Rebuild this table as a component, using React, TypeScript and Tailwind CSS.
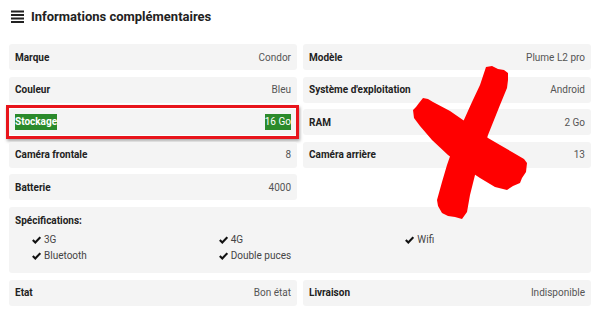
import React from 'react';

type Spec = { label: string; value: string; highlight?: boolean };

const leftSpecs: Spec[] = [
  { label: 'Marque', value: 'Condor' },
  { label: 'Couleur', value: 'Bleu' },
  { label: 'Stockage', value: '16 Go', highlight: true },
  { label: 'Caméra frontale', value: '8' },
  { label: 'Batterie', value: '4000' },
];

const rightSpecs: Spec[] = [
  { label: 'Modèle', value: 'Plume L2 pro' },
  { label: "Système d'exploitation", value: 'Android' },
  { label: 'RAM', value: '2 Go' },
  { label: 'Caméra arrière', value: '13' },
];

const features = ['3G', '4G', 'Wifi', 'Bluetooth', 'Double puces'];

const BarsIcon = () => (
  <svg width="13" height="13" viewBox="0 0 13 13" className="shrink-0">
    <rect x="0" y="0.5" width="13" height="2" fill="#222" />
    <rect x="0" y="4" width="13" height="2" fill="#222" />
    <rect x="0" y="7.5" width="13" height="2" fill="#222" />
    <rect x="0" y="11" width="13" height="2" fill="#222" />
  </svg>
);

const Check = () => (
  <svg width="9" height="8" viewBox="0 0 9 8" className="shrink-0">
    <path d="M0.8 4 L3.3 6.5 L8.3 1.1" fill="none" stroke="#111" strokeWidth="2.1" />
  </svg>
);

const Row = ({ label, value, highlight }: Spec) => (
  <div className="relative flex h-[26px] items-center justify-between rounded-[3px] bg-[#f4f4f4] px-[6px] text-[10px]">
    {highlight ? (
      <>
        <span className="bg-[#2b8a2b] font-bold leading-[16px] text-white">{label}</span>
        <span className="bg-[#2b8a2b] leading-[16px] text-white">{value}</span>
        <div className="pointer-events-none absolute -left-[3px] -right-[2px] -top-[4px] -bottom-[4px] border-[3px] border-[#e8141b] shadow-[1px_2px_3px_rgba(0,0,0,0.35)]" />
      </>
    ) : (
      <>
        <span className="font-bold text-[#222]">{label}</span>
        <span className="text-[#555]">{value}</span>
      </>
    )}
  </div>
);

export default function App() {
  return (
    <div className="relative h-[316px] w-[600px] overflow-hidden bg-white px-[9px] font-['Roboto',sans-serif]">
      <div className="flex h-[32px] items-center gap-[7px] pl-[2px] pt-[1px]">
        <BarsIcon />
        <h2 className="text-[13px] font-bold text-[#222]">Informations complémentaires</h2>
      </div>

      <div className="mt-[12px] grid grid-cols-2 gap-x-[6px]">
        <div className="flex flex-col gap-[6.5px]">
          {leftSpecs.map((s) => (
            <Row key={s.label} {...s} />
          ))}
        </div>
        <div className="flex flex-col gap-[6.5px]">
          {rightSpecs.map((s) => (
            <Row key={s.label} {...s} />
          ))}
        </div>
      </div>

      <div className="mt-[6.5px] h-[66.5px] rounded-[3px] bg-[#f4f4f4] px-[6px] pt-[6px] text-[10px]">
        <div className="font-bold leading-[16px] text-[#222]">Spécifications:</div>
        <ul className="ml-[17px] mt-[3px] grid w-[560px] grid-cols-3 leading-[16px] text-[#444]">
          {features.map((f) => (
            <li key={f} className="flex items-center gap-[3px]">
              <Check />
              {f}
            </li>
          ))}
        </ul>
      </div>

      <div className="mt-[6.5px] grid grid-cols-2 gap-x-[6px]">
        <Row label="Etat" value="Bon état" />
        <Row label="Livraison" value="Indisponible" />
      </div>

      {/* brush-stroke cross drawn over the right column */}
      <svg className="pointer-events-none absolute left-0 top-0" width="600" height="316" viewBox="0 0 600 316">
        <path
          d="M486 67 L492 66 L498 69 L504 70 L508 73 L508 80 L507 88 L500 105 L492 125 L488 135 L480 160 L475 175 L470 195 L467 212 L462 219 L455 217 L448 216 L442 213 L438 206 L437 200 L442 182 L447 165 L455 142 L463 122 L472 102 L480 85 L484 73 Z"
          fill="#ff0000"
        />
        <path
          d="M423 98 L428 99 L433 102 L450 111 L463 120 L478 130 L488 138 L500 145 L512 152 L524 159 L527 163 L526 172 L522 178 L520 183 L513 186 L507 190 L495 187 L480 178 L465 168 L448 155 L432 140 L420 126 L414 118 L413 110 L416 107 L419 103 Z"
          fill="#ff0000"
        />
      </svg>
    </div>
  );
}
